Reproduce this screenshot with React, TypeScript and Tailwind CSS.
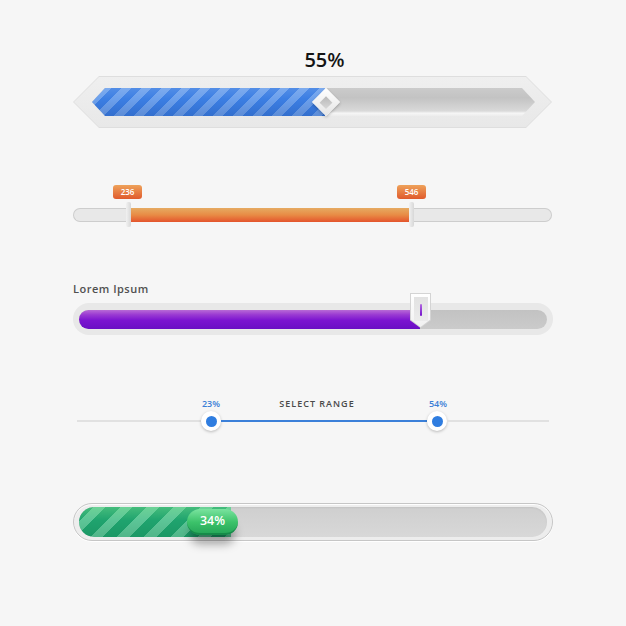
import React from "react";

const hexOuter =
  "[clip-path:polygon(26px_0,calc(100%-26px)_0,100%_50%,calc(100%-26px)_100%,26px_100%,0_50%)]";
const hexMid =
  "[clip-path:polygon(25px_0,calc(100%-25px)_0,100%_50%,calc(100%-25px)_100%,25px_100%,0_50%)]";
const hexInner =
  "[clip-path:polygon(13px_0,calc(100%-13px)_0,100%_50%,calc(100%-13px)_100%,13px_100%,0_50%)]";

function Handle() {
  return <div className="w-[5px] h-[25px] shrink-0 rounded-[2px] bg-[linear-gradient(to_right,#f1f1f1,#d7d7d7)]" />;
}

function OrangeTag({ children }: { children: React.ReactNode }) {
  return (
    <div className="w-[29px] h-[14px] shrink-0 rounded-[3px] bg-[linear-gradient(to_bottom,#eea25a,#e05a2c)] text-white text-[8px] font-semibold leading-[14px] text-center">
      {children}
    </div>
  );
}

function BlueThumb() {
  return (
    <div className="w-[20px] h-[20px] shrink-0 rounded-full bg-white shadow-[0_1px_3px_rgba(0,0,0,0.25)] flex items-center justify-center">
      <div className="w-[11px] h-[11px] rounded-full bg-[#2f7de0]" />
    </div>
  );
}

export default function App() {
  return (
    <div className="w-[626px] h-[626px] bg-[#f6f6f6] font-['Open_Sans',sans-serif] flex flex-col pl-[73px] overflow-hidden">
      {/* 55% title */}
      <div className="mt-[48px] w-[479px] h-[24px] leading-[24px] text-center text-[20px] font-semibold text-[#141414] pl-[24px]">
        55%
      </div>

      {/* Hex progress bar */}
      <div className="relative mt-[4px] h-[52px] w-[479px]">
        <div className={`h-full w-full p-[1px] bg-[#dedede] ${hexOuter}`}>
          <div className={`h-full w-full flex items-center pl-[18px] pr-[16px] bg-[linear-gradient(to_bottom,#efefef,#e8e8e8)] ${hexMid}`}>
            <div className={`flex-1 h-[28px] flex bg-[linear-gradient(to_bottom,#cbcbcb,#c3c3c3_35%,#d9d9d9_82%,#f6f6f6_90%,#ececec)] ${hexInner}`}>
              <div className="w-[233px] h-full bg-[linear-gradient(to_bottom,rgba(255,255,255,0.12),rgba(255,255,255,0)_40%,rgba(0,20,80,0.14)),repeating-linear-gradient(135deg,#3b7ee3_0px,#3b7ee3_7px,#6ca0ec_7px,#6ca0ec_14px)]" />
            </div>
          </div>
        </div>
        <div className="absolute left-[243px] top-[16px] w-[20px] h-[20px] rotate-45 bg-[linear-gradient(135deg,#ffffff,#e4e4e4)] shadow-[1px_1px_3px_rgba(0,0,0,0.25)] flex items-center justify-center">
          <div className="w-[9px] h-[9px] bg-[linear-gradient(135deg,#b8b8b8,#d8d8d8)]" />
        </div>
      </div>

      {/* Orange range slider */}
      <div className="mt-[57px] w-[479px] flex flex-col">
        <div className="flex h-[14px] pl-[40px] gap-[255px]">
          <OrangeTag>236</OrangeTag>
          <OrangeTag>546</OrangeTag>
        </div>
        <div className="mt-[3px] flex items-center h-[25px]">
          <div className="w-[53px] h-[14px] rounded-l-full border border-r-0 border-[#cdcdcd] bg-[#e8e8e8]" />
          <Handle />
          <div className="w-[278px] h-[14px] bg-[linear-gradient(to_bottom,#e6ab62,#e88b45_50%,#e4542c)]" />
          <Handle />
          <div className="flex-1 h-[14px] rounded-r-full border border-l-0 border-[#cdcdcd] bg-[#e8e8e8]" />
        </div>
      </div>

      {/* Purple slider */}
      <div className="mt-[55px] h-[14px] leading-[14px] text-[11px] font-semibold tracking-[0.5px] text-[#505050]">
        Lorem Ipsum
      </div>
      <div className="relative mt-[7px] h-[32px] w-[480px] rounded-full bg-[#e8e8e8] px-[6px] pt-[7px] pb-[6px]">
        <div className="h-full w-full rounded-full bg-[linear-gradient(to_bottom,#c2c2c2,#cbcbcb)] flex">
          <div className="w-[341px] h-full rounded-l-full bg-[linear-gradient(to_bottom,#b86ad6,#9a3ad2_25%,#7b14d0_55%,#6a0fc4)]" />
        </div>
        <div className="absolute left-[337px] top-[-10px] w-[21px] h-[35px] bg-[#d4d4d4] [clip-path:polygon(0_0,100%_0,100%_78%,50%_100%,0_78%)] p-[1px]">
          <div className="h-full w-full bg-[linear-gradient(to_bottom,#ffffff,#f1f1f1)] [clip-path:polygon(0_0,100%_0,100%_78%,50%_100%,0_78%)] flex justify-center pt-[3px]">
            <div className="w-[14px] h-[24px] bg-[linear-gradient(to_bottom,#e2e2e2,#ececec)] flex justify-center pt-[7px]">
              <div className="w-[2px] h-[12px] rounded-full bg-[linear-gradient(to_bottom,#b46ae0,#7412cc)]" />
            </div>
          </div>
        </div>
      </div>

      {/* Select range */}
      <div className="mt-[63px] w-[479px] flex flex-col">
        <div className="flex h-[12px] text-[9px] leading-[12px] font-semibold">
          <div className="ml-[118px] w-[40px] text-center text-[#3b7fd6]">23%</div>
          <div className="ml-[26px] w-[120px] text-center whitespace-nowrap tracking-[1px] text-[#4a4a4a]">SELECT RANGE</div>
          <div className="ml-[41px] w-[40px] text-center text-[#3b7fd6]">54%</div>
        </div>
        <div className="mt-[1px] flex items-center h-[20px] pl-[4px] pr-[3px]">
          <div className="w-[124px] h-[2px] bg-[#e1e1e1]" />
          <BlueThumb />
          <div className="w-[206px] h-[2px] bg-[#3b80d9]" />
          <BlueThumb />
          <div className="flex-1 h-[2px] bg-[#e1e1e1]" />
        </div>
      </div>

      {/* Green progress */}
      <div className="mt-[72px] h-[38px] w-[480px] rounded-full border border-[#c6c6c6] bg-[#ededed] shadow-[inset_0_1px_1px_#ffffff,0_1px_0_#ffffff] px-[5px] py-[3px]">
        <div className="relative h-full w-full rounded-full bg-[linear-gradient(to_bottom,#cfcfcf,#d8d8d8)] shadow-[inset_0_1px_2px_rgba(0,0,0,0.06)] flex">
          <div className="w-[152px] h-full rounded-l-full bg-[linear-gradient(to_bottom,rgba(140,235,150,0.35),rgba(255,255,255,0)_45%,rgba(0,70,40,0.12)),repeating-linear-gradient(135deg,#1fa36e_0px,#1fa36e_10px,#5cc597_10px,#5cc597_19px)]" />
          <div className="absolute left-[108px] top-[2px] w-[51px] h-[26px] rounded-full bg-[linear-gradient(to_bottom,#7ae39f,#3cc26a_55%,#27a85a)] border-b-2 border-[#178a49] shadow-[0_12px_10px_-3px_rgba(0,0,0,0.35)] flex items-center justify-center text-white text-[12.5px] font-semibold">
            34%
          </div>
        </div>
      </div>
    </div>
  );
}
